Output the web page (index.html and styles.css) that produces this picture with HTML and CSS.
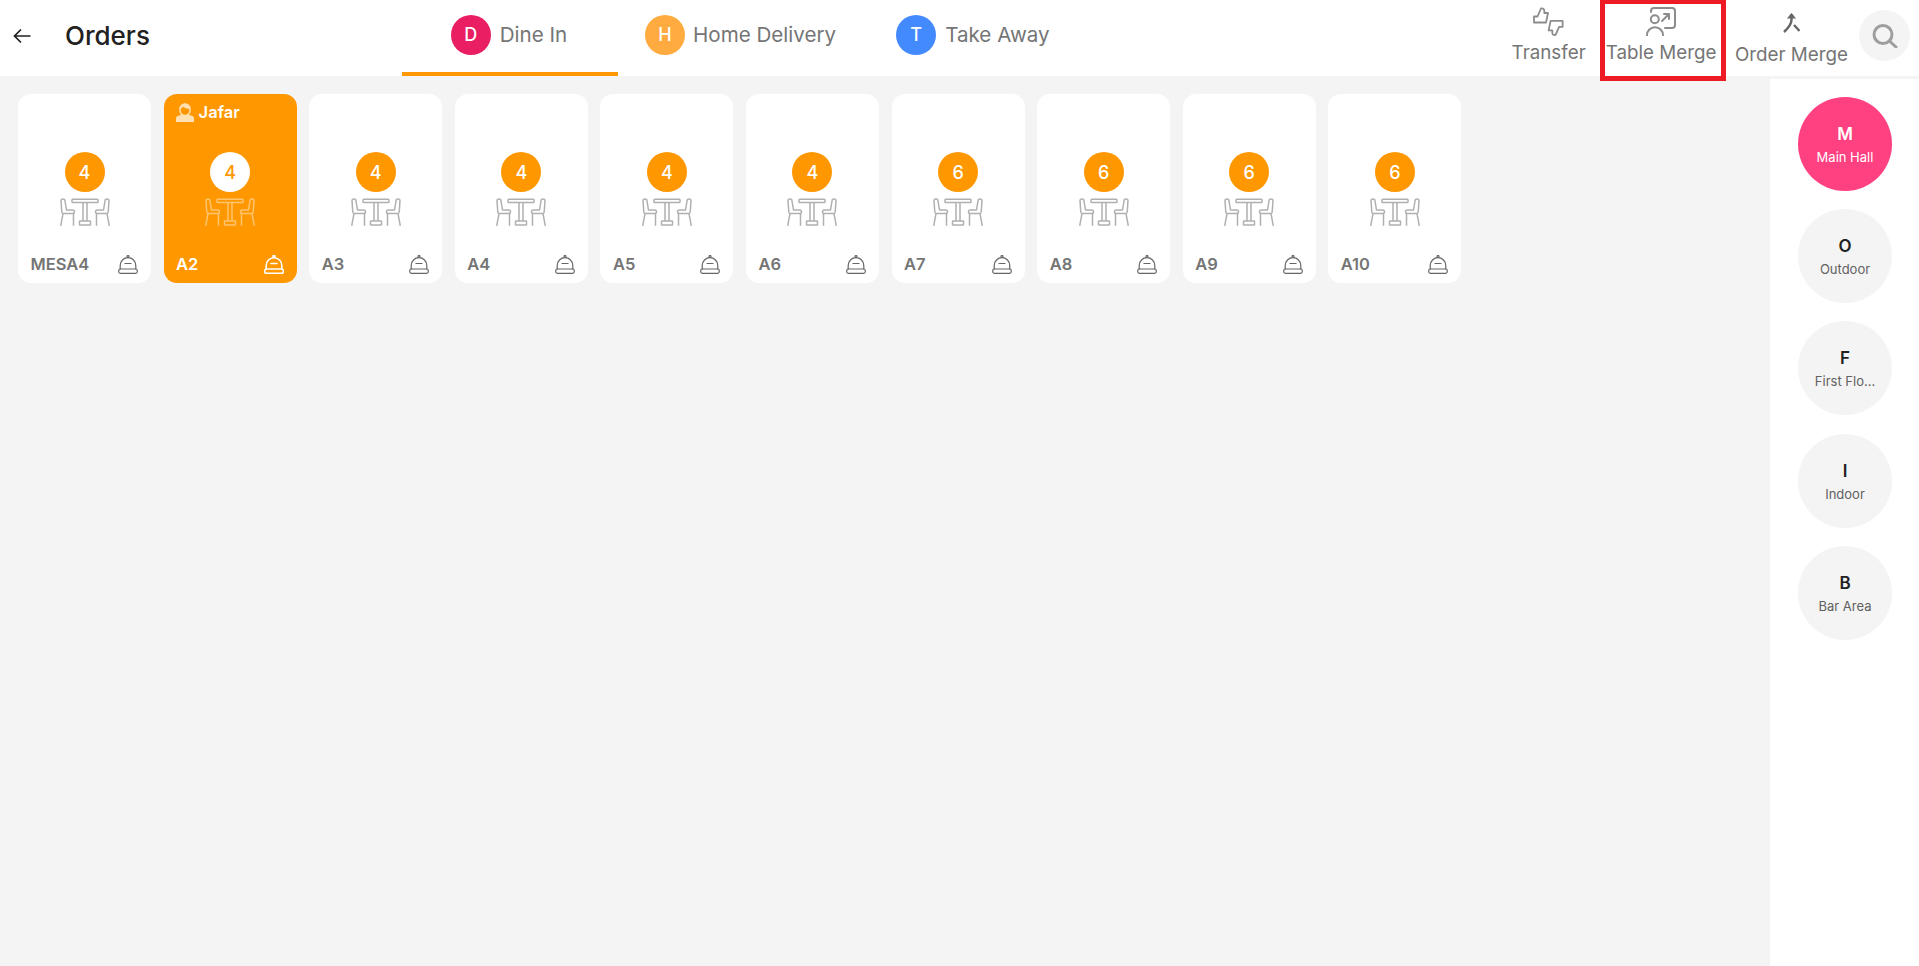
FILE: index.html
```html
<!DOCTYPE html>
<html lang="en">
<head>
    <meta charset="UTF-8">
    <title>Orders</title>
    <link rel="stylesheet" href="styles.css">
</head>
<body>
    <svg class="icon-defs" width="0" height="0">
        <symbol id="table-icon" viewBox="0 0 50 28">
            <g fill="none" stroke="currentColor" stroke-width="1.5" stroke-linejoin="round">
                <rect x="12" y="1.2" width="26" height="3.4" rx="0.8"/>
                <path d="M23 4.6V23M27 4.6V23"/>
                <rect x="19.5" y="23" width="11" height="4" rx="0.5"/>
                <g id="chair">
                    <path d="M1 3a2 2 0 0 1 4 0l1.5 9h6.2a1.7 1.7 0 0 1 0 3.6H3.5Q2 15.6 1.8 14Z"/>
                    <path d="M3 15.6L0.7 27.8M13.5 15.6V27.8"/>
                </g>
                <use href="#chair" transform="matrix(-1 0 0 1 50 0)"/>
            </g>
        </symbol>
        <symbol id="bell-icon" viewBox="0 0 20 19">
            <g fill="none" stroke="currentColor" stroke-linecap="round" stroke-linejoin="round">
                <circle cx="10" cy="1.5" r="1"/>
                <path d="M2.2 14V10.5a7.8 7.8 0 0 1 15.6 0V14"/>
                <path d="M7 8.5h6"/>
                <rect x="0.7" y="14" width="18.6" height="4.3" rx="1.8"/>
            </g>
        </symbol>
    </svg>

    <header class="topbar">
        <div class="title-area">
            <svg class="back-icon" width="18" height="16" viewBox="0 0 18 16">
                <path d="M17.5 8H1.5M8 1.5L1.5 8L8 14.5" fill="none" stroke="#212121" stroke-width="1.7"/>
            </svg>
            <h1>Orders</h1>
        </div>

        <nav class="tabs">
            <a class="tab tab-active"><span class="tab-dot dot-dine">D</span>Dine In</a>
            <a class="tab"><span class="tab-dot dot-home">H</span>Home Delivery</a>
            <a class="tab"><span class="tab-dot dot-take">T</span>Take Away</a>
        </nav>

        <div class="tools">
            <div class="tool">
                <svg width="31" height="29" viewBox="0 0 31 29">
                    <g fill="none" stroke="#8c8c8c" stroke-width="1.8" stroke-linejoin="round">
                        <path id="thumb" d="M1 9.5H4.5L8 1.5Q11 1 11.3 3.5V6H15L13 15.5H1Z"/>
                        <use href="#thumb" transform="rotate(180 15.3 14.7)"/>
                    </g>
                </svg>
                <span>Transfer</span>
            </div>
            <div class="tool tool-marked">
                <svg width="30" height="29" viewBox="0 0 30 29">
                    <g fill="none" stroke="#8c8c8c" stroke-width="2" stroke-linecap="round" stroke-linejoin="round">
                        <circle cx="8.8" cy="12.2" r="4"/>
                        <path d="M1 28.2a8 8 0 0 1 16 0"/>
                        <path d="M5 5V4a3 3 0 0 1 3-3h18a3 3 0 0 1 3 3v14a3 3 0 0 1-3 3h-7"/>
                        <path d="M16 14l7-7M18 7h5v5"/>
                    </g>
                </svg>
                <span>Table Merge</span>
            </div>
            <div class="tool tool-low">
                <svg width="17" height="21" viewBox="0 0 17 21">
                    <g fill="none" stroke="#666" stroke-width="2.4">
                        <path d="M8.5 2V8Q8.5 13 1 20M11 13L16.5 19"/>
                        <path d="M4.5 6.5L8.5 1.5L12.5 6.5" fill="#666" stroke-width="1"/>
                    </g>
                </svg>
                <span>Order Merge</span>
            </div>
            <div class="search-btn">
                <svg width="26" height="24" viewBox="0 0 26 24">
                    <circle cx="11" cy="10.5" r="9" fill="none" stroke="#9e9e9e" stroke-width="3"/>
                    <path d="M17.5 17L24 23" stroke="#9e9e9e" stroke-width="3" stroke-linecap="round"/>
                </svg>
            </div>
        </div>
    </header>

    <main class="page">
        <section class="tables">
            <div class="card">
                <div class="waiter"></div>
                <span class="seats">4</span>
                <svg class="table-svg"><use href="#table-icon"/></svg>
                <div class="card-foot"><span>MESA4</span><svg class="bell-svg"><use href="#bell-icon"/></svg></div>
            </div>
            <div class="card card-busy">
                <div class="waiter">
                    <svg width="18" height="19" viewBox="0 0 18 19">
                        <path d="M0 19V15.5Q0 13 3 12.5L6 11.5Q9 13.5 12 11.5L15 12.5Q18 13 18 15.5V19Z" fill="#ffe0b2"/>
                        <path d="M4 6a5 5 0 0 1 10 0v1.5a5 5 0 0 1-10 0Z" fill="none" stroke="#ffe0b2" stroke-width="1.4"/>
                        <path d="M3.5 6a5.5 5.5 0 0 1 11 0Q9 5.5 7 3.5Q6 5.5 3.5 6Z" fill="#ffe0b2"/>
                    </svg>
                    Jafar
                </div>
                <span class="seats">4</span>
                <svg class="table-svg"><use href="#table-icon"/></svg>
                <div class="card-foot"><span>A2</span><svg class="bell-svg"><use href="#bell-icon"/></svg></div>
            </div>
            <div class="card">
                <div class="waiter"></div>
                <span class="seats">4</span>
                <svg class="table-svg"><use href="#table-icon"/></svg>
                <div class="card-foot"><span>A3</span><svg class="bell-svg"><use href="#bell-icon"/></svg></div>
            </div>
            <div class="card">
                <div class="waiter"></div>
                <span class="seats">4</span>
                <svg class="table-svg"><use href="#table-icon"/></svg>
                <div class="card-foot"><span>A4</span><svg class="bell-svg"><use href="#bell-icon"/></svg></div>
            </div>
            <div class="card">
                <div class="waiter"></div>
                <span class="seats">4</span>
                <svg class="table-svg"><use href="#table-icon"/></svg>
                <div class="card-foot"><span>A5</span><svg class="bell-svg"><use href="#bell-icon"/></svg></div>
            </div>
            <div class="card">
                <div class="waiter"></div>
                <span class="seats">4</span>
                <svg class="table-svg"><use href="#table-icon"/></svg>
                <div class="card-foot"><span>A6</span><svg class="bell-svg"><use href="#bell-icon"/></svg></div>
            </div>
            <div class="card">
                <div class="waiter"></div>
                <span class="seats">6</span>
                <svg class="table-svg"><use href="#table-icon"/></svg>
                <div class="card-foot"><span>A7</span><svg class="bell-svg"><use href="#bell-icon"/></svg></div>
            </div>
            <div class="card">
                <div class="waiter"></div>
                <span class="seats">6</span>
                <svg class="table-svg"><use href="#table-icon"/></svg>
                <div class="card-foot"><span>A8</span><svg class="bell-svg"><use href="#bell-icon"/></svg></div>
            </div>
            <div class="card">
                <div class="waiter"></div>
                <span class="seats">6</span>
                <svg class="table-svg"><use href="#table-icon"/></svg>
                <div class="card-foot"><span>A9</span><svg class="bell-svg"><use href="#bell-icon"/></svg></div>
            </div>
            <div class="card">
                <div class="waiter"></div>
                <span class="seats">6</span>
                <svg class="table-svg"><use href="#table-icon"/></svg>
                <div class="card-foot"><span>A10</span><svg class="bell-svg"><use href="#bell-icon"/></svg></div>
            </div>
        </section>

        <aside class="areas">
            <div class="area area-active"><b>M</b><span>Main Hall</span></div>
            <div class="area"><b>O</b><span>Outdoor</span></div>
            <div class="area"><b>F</b><span>First Flo...</span></div>
            <div class="area"><b>I</b><span>Indoor</span></div>
            <div class="area"><b>B</b><span>Bar Area</span></div>
        </aside>
    </main>
</body>
</html>
```

FILE: styles.css
```css
*, *::after {
    box-sizing: border-box;
}
body {
    font-family: Inter, "Liberation Sans", sans-serif;
    background-color: #f4f4f4;
    margin: 0;
    height: 966px;
    overflow: hidden;
    display: flex;
    flex-direction: column;
}
.icon-defs {
    position: absolute;
}

/* top bar */
.topbar {
    height: 76px;
    background-color: white;
    display: flex;
    position: relative;
    flex-shrink: 0;
}
.title-area {
    width: 402px;
    display: flex;
    align-items: center;
    padding: 0 0 5px 13px;
}
.title-area h1 {
    margin: 0 0 0 34px;
    font-size: 26px;
    font-weight: 500;
    color: #212121;
}
.tabs {
    display: flex;
}
.tab {
    display: flex;
    align-items: center;
    gap: 9px;
    height: 76px;
    padding: 0 30px 7px;
    font-size: 20.6px;
    color: #757575;
}
.tab-active {
    width: 216px;
    justify-content: center;
    padding-left: 47px;
    padding-right: 49px;
    border-bottom: 4px solid #ff9800;
    padding-bottom: 3px;
}
.tab:nth-child(2) {
    padding-left: 27px;
    gap: 8px;
}
.tab-dot {
    width: 40px;
    height: 40px;
    border-radius: 50%;
    color: white;
    font-size: 18px;
    font-weight: 500;
    display: flex;
    align-items: center;
    justify-content: center;
}
.dot-dine {
    background-color: #e91e63;
}
.dot-home {
    background-color: #ffab40;
}
.dot-take {
    background-color: #448aff;
}
.tools {
    margin-left: auto;
    display: flex;
    padding-right: 9px;
}
.tool {
    display: flex;
    flex-direction: column;
    align-items: center;
    gap: 6px;
    padding-top: 7px;
    font-size: 18.8px;
    line-height: 22px;
    color: #757575;
    margin-right: 20px;
    position: relative;
}
.tool svg {
    display: block;
}
.tool-marked {
    margin-right: 18.5px;
}
.tool-low {
    padding-top: 12px;
    gap: 11px;
    margin-right: 11px;
}
.tool-marked::after {
    content: "";
    position: absolute;
    top: 0;
    left: -6px;
    right: -10px;
    height: 81px;
    border: 5px solid #ed1c24;
    border-top-width: 4px;
}
.search-btn {
    width: 51px;
    height: 51px;
    margin-top: 10px;
    border-radius: 50%;
    background-color: #f4f4f4;
    display: flex;
    align-items: center;
    justify-content: center;
}

/* tables */
.page {
    flex: 1;
    display: flex;
    min-height: 0;
}
.tables {
    flex: 1;
    display: flex;
    align-items: flex-start;
    gap: 12.6px;
    padding: 18px 0 0 18px;
}
.card {
    width: 133px;
    height: 189px;
    background-color: white;
    border-radius: 13px;
    display: flex;
    flex-direction: column;
    align-items: center;
    padding-top: 9px;
    color: #b0b0b0;
}
.waiter {
    width: 100%;
    height: 28px;
    display: flex;
    align-items: flex-start;
    gap: 5px;
    padding-left: 12px;
    font-size: 16.5px;
    font-weight: 600;
    line-height: 19px;
    color: white;
}
.seats {
    width: 40px;
    height: 40px;
    margin-top: 21px;
    border-radius: 50%;
    background-color: #ff9800;
    color: white;
    font-size: 18px;
    font-weight: 500;
    display: flex;
    align-items: center;
    justify-content: center;
}
.table-svg {
    width: 50px;
    height: 28px;
    margin-top: 6px;
}
.card-foot {
    width: 100%;
    margin-top: auto;
    padding: 0 13px 9px 12.5px;
    display: flex;
    align-items: center;
    justify-content: space-between;
    font-size: 16.5px;
    font-weight: 600;
    color: #757575;
}
.bell-svg {
    width: 20px;
    height: 19px;
    color: #666;
    stroke-width: 1.2;
}
.card-busy {
    background-color: #ff9800;
    color: #ffc46e;
}
.card-busy .seats {
    background-color: white;
    color: #ff9800;
}
.card-busy .card-foot {
    color: white;
}
.card-busy .bell-svg {
    color: white;
    stroke-width: 1.6;
}

/* floor areas */
.areas {
    width: 149px;
    margin-top: 3px;
    padding: 18px 0 0 28px;
    background-color: white;
    display: flex;
    flex-direction: column;
    gap: 18.2px;
}
.area {
    width: 94px;
    height: 94px;
    border-radius: 50%;
    background-color: #f4f4f4;
    display: flex;
    flex-direction: column;
    align-items: center;
    justify-content: center;
    gap: 4px;
    color: #616161;
    font-size: 13px;
    line-height: 16px;
}
.area b {
    font-size: 17px;
    font-weight: 600;
    line-height: 22px;
    color: #212121;
}
.area-active {
    background-color: #ff4081;
    color: white;
}
.area-active b {
    color: white;
}
```
